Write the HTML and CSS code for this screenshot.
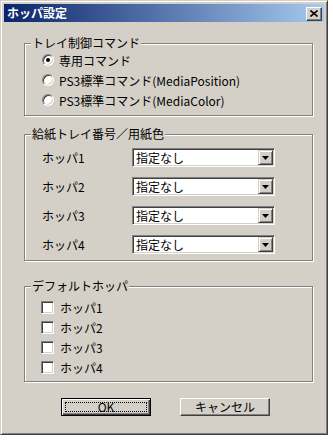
FILE: index.html
```html
<!DOCTYPE html>
<html lang="ja">
<head>
<meta charset="utf-8">
<title>ホッパ設定</title>
<link rel="stylesheet" href="styles.css">
</head>
<body>
<div class="window">
  <div class="titlebar">
    <span class="title">ホッパ設定</span>
    <span class="close"><svg width="8" height="7" viewBox="0 0 8 7"><path d="M0.5 0.5 L7.5 6.5 M7.5 0.5 L0.5 6.5" stroke="#000" stroke-width="1.6" fill="none"/></svg></span>
  </div>
  <div class="content">
    <div class="group g1">
      <div class="group-title">トレイ制御コマンド</div>
      <div class="opt"><span class="radio checked"></span><span>専用コマンド</span></div>
      <div class="opt"><span class="radio"></span><span>PS3標準コマンド(MediaPosition)</span></div>
      <div class="opt"><span class="radio"></span><span>PS3標準コマンド(MediaColor)</span></div>
    </div>
    <div class="group g2">
      <div class="group-title">給紙トレイ番号／用紙色</div>
      <div class="combos">
        <span class="lbl">ホッパ1</span>
        <div class="combo"><span class="val">指定なし</span><span class="drop"><svg width="7" height="4" viewBox="0 0 7 4"><polygon points="0,0 7,0 3.5,4" fill="#000"/></svg></span></div>
        <span class="lbl">ホッパ2</span>
        <div class="combo"><span class="val">指定なし</span><span class="drop"><svg width="7" height="4" viewBox="0 0 7 4"><polygon points="0,0 7,0 3.5,4" fill="#000"/></svg></span></div>
        <span class="lbl">ホッパ3</span>
        <div class="combo"><span class="val">指定なし</span><span class="drop"><svg width="7" height="4" viewBox="0 0 7 4"><polygon points="0,0 7,0 3.5,4" fill="#000"/></svg></span></div>
        <span class="lbl">ホッパ4</span>
        <div class="combo"><span class="val">指定なし</span><span class="drop"><svg width="7" height="4" viewBox="0 0 7 4"><polygon points="0,0 7,0 3.5,4" fill="#000"/></svg></span></div>
      </div>
    </div>
    <div class="group g3">
      <div class="group-title">デフォルトホッパ</div>
      <div class="chk"><span class="box"></span><span>ホッパ1</span></div>
      <div class="chk"><span class="box"></span><span>ホッパ2</span></div>
      <div class="chk"><span class="box"></span><span>ホッパ3</span></div>
      <div class="chk"><span class="box"></span><span>ホッパ4</span></div>
    </div>
    <div class="buttons">
      <div class="btn default"><span class="focus">OK</span></div>
      <div class="btn">キャンセル</div>
    </div>
  </div>
</div>
</body>
</html>
```

FILE: styles.css
```css
html, body {
  margin: 0;
  padding: 0;
  background: #ffffff;
}
body {
  font-family: "MS UI Gothic", "Noto Sans CJK JP", sans-serif;
  font-size: 12px;
  color: #000;
}
.window {
  width: 328px;
  height: 435px;
  box-sizing: border-box;
  background: #d4d0c8;
  border: 1px solid;
  border-color: #d4d0c8 #404040 #404040 #d4d0c8;
  box-shadow: inset 1px 1px #ffffff, inset -1px -1px #808080;
  padding: 3px;
  display: flex;
  flex-direction: column;
}
.titlebar {
  height: 18px;
  flex: none;
  background: linear-gradient(to right, #0a246a, #a6caf0);
  display: flex;
  align-items: center;
  justify-content: space-between;
  padding: 0 2px 0 3px;
  color: #fff;
  font-weight: bold;
  font-size: 12px;
  line-height: 18px;
}
.close {
  width: 16px;
  height: 14px;
  box-sizing: border-box;
  background: #d4d0c8;
  border: 1px solid;
  border-color: #ffffff #404040 #404040 #ffffff;
  box-shadow: inset -1px -1px #808080;
  display: flex;
  align-items: center;
  justify-content: center;
  margin-top: 1px;
}
.close svg { display: block; margin: 0 1px 1px 0; }
.content {
  padding: 0 0 0 20px;
}
.group {
  width: 289px;
  box-sizing: border-box;
  border: 1px solid #808080;
  box-shadow: inset 1px 1px #ffffff, 1px 1px #ffffff;
}
.group-title {
  width: fit-content;
  margin: -8px 0 0 6px;
  padding: 0 1px;
  background: #d4d0c8;
  line-height: 14px;
  height: 14px;
}
.g1 {
  margin-top: 21px;
  padding-bottom: 5px;
}
.opt {
  height: 20px;
  display: flex;
  align-items: center;
  gap: 5px;
  padding-left: 17px;
}
.radio {
  width: 12px;
  height: 12px;
  box-sizing: border-box;
  border-radius: 50%;
  border: 1px solid;
  border-color: #808080 #ffffff #ffffff #808080;
  background: #ffffff;
  box-shadow: inset 1px 1px #404040, inset -1px -1px #d4d0c8;
  display: flex;
  align-items: center;
  justify-content: center;
  flex: none;
}
.radio.checked::after {
  content: "";
  width: 4px;
  height: 4px;
  border-radius: 50%;
  background: #000;
}
.g2 {
  margin-top: 18px;
  padding-bottom: 6px;
}
.combos {
  display: grid;
  grid-template-columns: 90px 143px;
  grid-auto-rows: 19px;
  row-gap: 10px;
  align-items: center;
  padding: 7px 0 0 17px;
}
.combo {
  height: 19px;
  box-sizing: border-box;
  background: #fff;
  border: 1px solid;
  border-color: #808080 #ffffff #ffffff #808080;
  box-shadow: inset 1px 1px #404040, inset -1px -1px #d4d0c8;
  display: flex;
  align-items: center;
  padding: 1px;
}
.val {
  flex: 1;
  padding-left: 2px;
  line-height: 15px;
}
.drop {
  width: 15px;
  height: 15px;
  box-sizing: border-box;
  background: #d4d0c8;
  border: 1px solid;
  border-color: #d4d0c8 #404040 #404040 #d4d0c8;
  box-shadow: inset 1px 1px #ffffff, inset -1px -1px #808080;
  display: flex;
  align-items: center;
  justify-content: center;
}
.drop svg { display: block; }
.g3 {
  margin-top: 25px;
  padding-bottom: 4px;
}
.g3 .group-title { margin-bottom: 4px; }
.chk {
  height: 20px;
  display: flex;
  align-items: center;
  gap: 6px;
  padding-left: 16px;
}
.box {
  width: 13px;
  height: 13px;
  box-sizing: border-box;
  background: #fff;
  border: 1px solid;
  border-color: #808080 #ffffff #ffffff #808080;
  box-shadow: inset 1px 1px #404040, inset -1px -1px #d4d0c8;
  flex: none;
}
.buttons {
  display: flex;
  gap: 29px;
  margin-top: 16px;
  padding-left: 37px;
}
.btn {
  width: 90px;
  height: 18px;
  box-sizing: border-box;
  background: #d4d0c8;
  border: 1px solid;
  border-color: #ffffff #404040 #404040 #ffffff;
  box-shadow: inset -1px -1px #808080;
  display: flex;
  align-items: center;
  justify-content: center;
  line-height: 14px;
}
.btn.default {
  border: 1px solid #000;
  box-shadow: inset 1px 1px #ffffff, inset -1px -1px #404040, inset -2px -2px #808080;
  padding: 3px;
}
.focus {
  flex: 1;
  align-self: stretch;
  border: 1px dotted #000;
  display: flex;
  align-items: center;
  justify-content: center;
}
```
